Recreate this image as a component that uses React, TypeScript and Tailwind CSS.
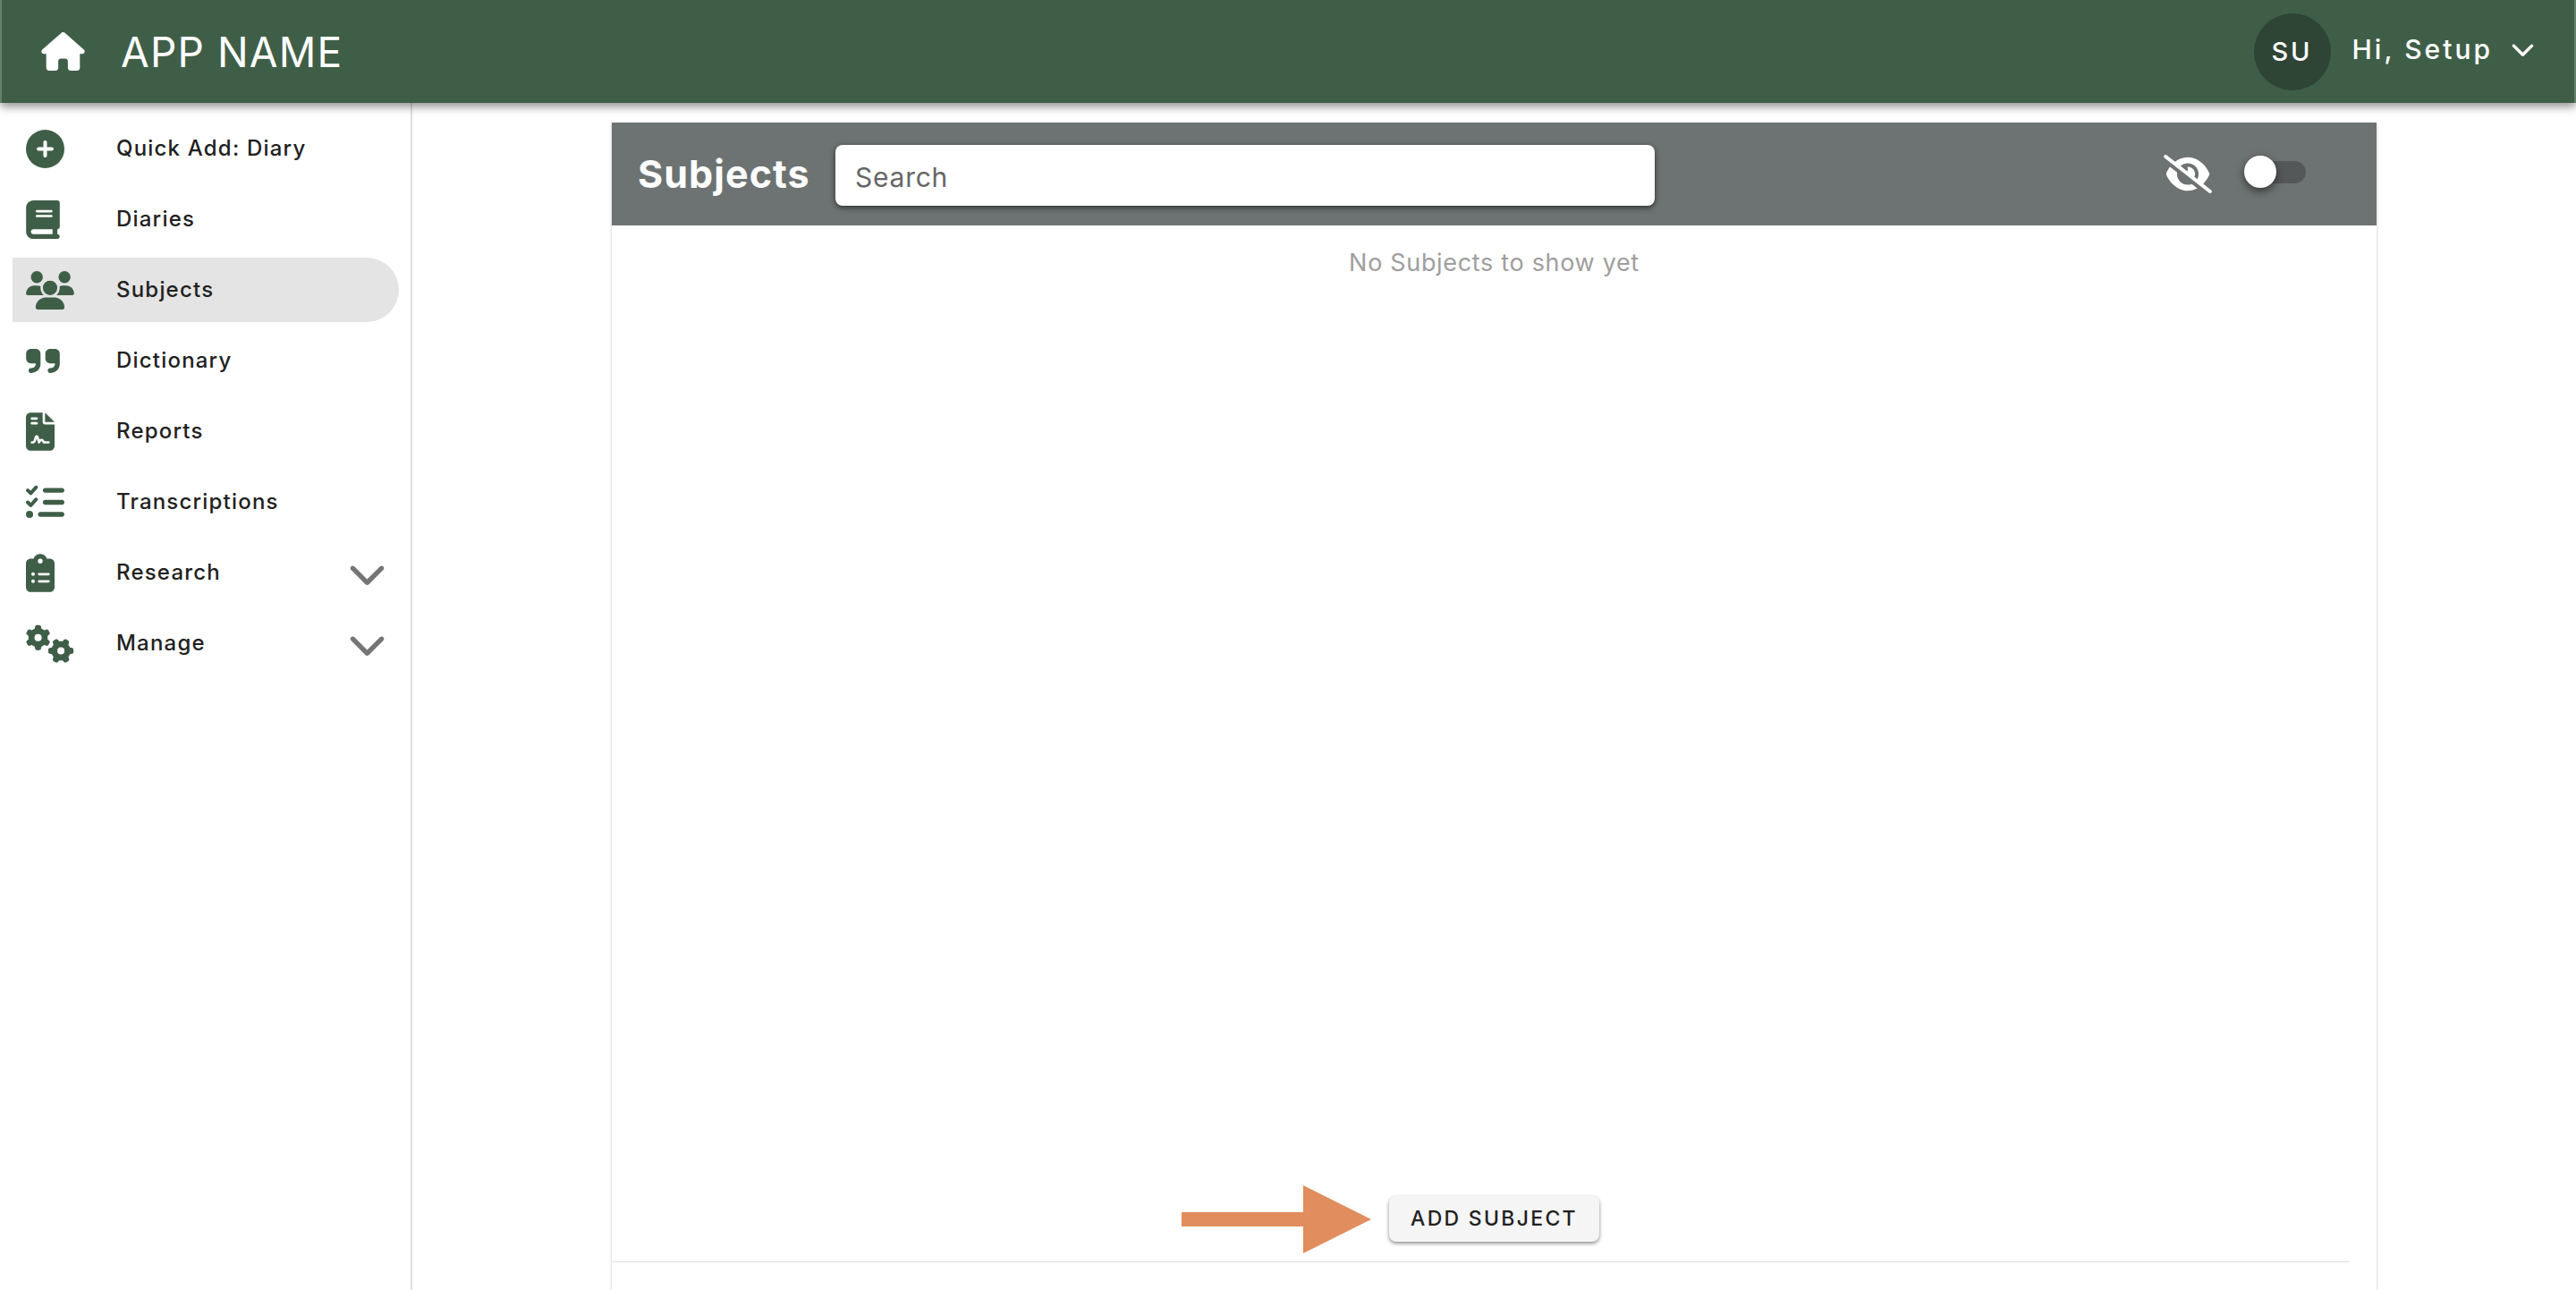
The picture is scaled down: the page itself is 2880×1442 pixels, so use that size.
import type { IconType } from "react-icons";
import {
  FaBook,
  FaChevronDown,
  FaCirclePlus,
  FaClipboardList,
  FaEyeSlash,
  FaFileContract,
  FaGears,
  FaHouse,
  FaListCheck,
  FaQuoteRight,
  FaUsers,
} from "react-icons/fa6";

type NavItem = {
  label: string;
  icon: IconType;
  iconWidth: string;
  active?: boolean;
  expandable?: boolean;
};

const NAV_ITEMS: NavItem[] = [
  { label: "Quick Add: Diary", icon: FaCirclePlus, iconWidth: "w-[43px]" },
  { label: "Diaries", icon: FaBook, iconWidth: "w-[38px]" },
  { label: "Subjects", icon: FaUsers, iconWidth: "w-[54px]", active: true },
  { label: "Dictionary", icon: FaQuoteRight, iconWidth: "w-[38px]" },
  { label: "Reports", icon: FaFileContract, iconWidth: "w-[32px]" },
  { label: "Transcriptions", icon: FaListCheck, iconWidth: "w-[43px]" },
  { label: "Research", icon: FaClipboardList, iconWidth: "w-[32px]", expandable: true },
  { label: "Manage", icon: FaGears, iconWidth: "w-[54px]", expandable: true },
];

function NavRow({ label, icon: Icon, iconWidth, active, expandable }: NavItem) {
  const content = (
    <>
      <span className="flex w-[101px] shrink-0">
        <Icon className={`h-[43px] text-[#3f5e48] ${iconWidth}`} aria-hidden />
      </span>
      <span className="flex-1 text-left text-2xl font-medium tracking-wider text-[#212121]">{label}</span>
      {expandable && <FaChevronDown className="mr-3.5 size-[43px] text-[#757575]" aria-hidden />}
    </>
  );
  const base = "flex h-[72px] w-full items-center rounded-l rounded-r-full pl-[15px]";
  return (
    <li>
      {expandable ? (
        <button type="button" aria-expanded="false" className={base}>
          {content}
        </button>
      ) : (
        <a href="#" aria-current={active ? "page" : undefined} className={active ? `${base} bg-[#e4e4e4]` : base}>
          {content}
        </a>
      )}
    </li>
  );
}

function TopBar() {
  return (
    <header className="relative z-10 flex h-[115px] items-center justify-between border-x-2 border-[#65806c] bg-[#3f5e48] px-11 text-white shadow-[0_4px_10px_rgba(0,0,0,0.45)]">
      <a href="#" className="flex items-center gap-10">
        <FaHouse className="h-[43px] w-[49px]" aria-label="Home" />
        <span className="text-[46px] leading-none tracking-wide">APP NAME</span>
      </a>
      <div className="flex items-center gap-6">
        <span className="flex size-[86px] items-center justify-center rounded-full bg-[#2e4435] text-[29px] font-medium tracking-widest">
          SU
        </span>
        <button type="button" className="flex items-center gap-5 pb-1.5 text-[30px] leading-none font-medium tracking-widest">
          Hi, Setup
          <FaChevronDown className="size-[27px]" aria-hidden />
        </button>
      </div>
    </header>
  );
}

function Arrow() {
  return (
    <svg viewBox="0 0 212 76" className="absolute right-full mr-5 h-[76px] w-[212px]" fill="#e28d5d" aria-hidden>
      <path d="M0 30H136V0L212 38L136 76V46H0Z" />
    </svg>
  );
}

function SubjectsPanel() {
  return (
    <section className="mx-[223px] mt-[22px] flex flex-1 flex-col shadow-[0_1px_3px_rgba(0,0,0,0.25)]">
      <div className="flex h-[115px] items-center bg-[#6d7372] px-[29px]">
        <h1 className="w-[221px] shrink-0 text-[43px] leading-none font-bold tracking-wide text-white">Subjects</h1>
        <input
          type="search"
          aria-label="Search"
          placeholder="Search"
          className="mt-0.5 h-[68px] w-[916px] min-w-0 rounded-lg bg-white px-[22px] pt-1 text-[30px] tracking-wide text-[#212121] shadow-[0_2px_6px_rgba(0,0,0,0.6)] placeholder:text-[#666666]"
        />
        <div className="mr-[50px] ml-auto flex items-center gap-10">
          <FaEyeSlash className="h-[43px] w-[54px] text-white" aria-hidden />
          <input
            type="checkbox"
            role="switch"
            aria-label="Show hidden subjects"
            className="relative mb-1 h-[25px] w-[65px] appearance-none rounded-full bg-[#555859] before:absolute before:-top-1.5 before:-left-1 before:size-9 before:rounded-full before:bg-white before:shadow-[0_4px_10px_rgba(0,0,0,0.5)]"
          />
        </div>
      </div>
      <p className="mt-[22px] text-center text-[27px] leading-10 tracking-wide text-[#9e9e9e]">No Subjects to show yet</p>
      <div className="mt-auto mr-[31px] mb-[31px] border-b border-[#dcdcdc] pb-[22px] pl-[31px]">
        <div className="relative mx-auto w-fit">
          <div className="absolute inset-0 flex items-center">
            <Arrow />
          </div>
          <button
            type="button"
            className="block h-[51px] rounded-lg bg-[#f5f5f5] px-6 text-[23px] leading-none font-medium tracking-widest text-[#212121] shadow-[0_2px_4px_rgba(0,0,0,0.45)]"
          >
            ADD SUBJECT
          </button>
        </div>
      </div>
    </section>
  );
}

export default function App() {
  return (
    <div className="flex min-h-screen flex-col bg-white font-['Inter',sans-serif]">
      <TopBar />
      <div className="flex flex-1">
        <nav aria-label="Main" className="w-[461px] shrink-0 border-r-2 border-[#e0e0e0] pt-[15px] pr-[13px] pl-3.5">
          <ul className="flex flex-col gap-[7px]">
            {NAV_ITEMS.map((item) => (
              <NavRow key={item.label} {...item} />
            ))}
          </ul>
        </nav>
        <main className="flex min-w-0 flex-1 flex-col">
          <SubjectsPanel />
        </main>
      </div>
    </div>
  );
}
